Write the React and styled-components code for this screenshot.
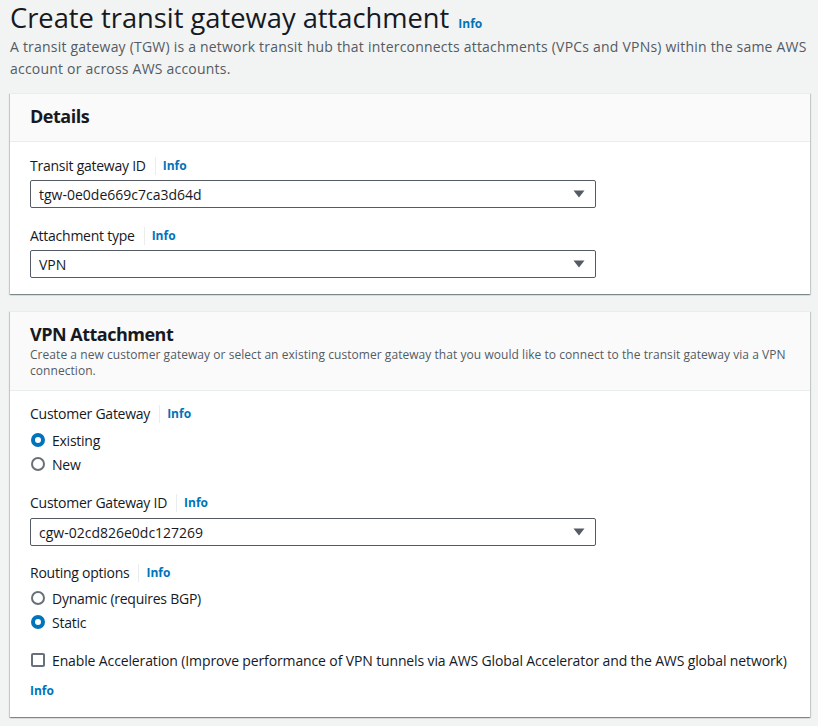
import React from "react";
import styled, { createGlobalStyle } from "styled-components";

const Global = createGlobalStyle`
  html, body { margin: 0; padding: 0; background: #f2f3f3; }
  body { font-family: "Open Sans", "Noto Sans", Arial, sans-serif; color: #16191f; }
  * { box-sizing: border-box; }
`;

const Page = styled.div`
  padding: 0 8px 10px 10px;
  width: 818px;
`;

const TitleRow = styled.div`
  display: flex;
  align-items: baseline;
  gap: 9px;
`;

const Title = styled.h1`
  margin: 0;
  font-size: 27.3px;
  font-weight: 400;
  line-height: 36px;
  color: #16191f;
`;

const Info = styled.a`
  font-size: 12px;
  font-weight: 700;
  color: #0073bb;
  text-decoration: none;
  line-height: 16px;
`;

const Description = styled.p`
  margin: 0 0 13px 0;
  font-size: 14px;
  line-height: 22px;
  letter-spacing: 0.21px;
  color: #545b64;
`;

const Panel = styled.section`
  background: #fff;
  width: 800px;
  box-shadow: 0 1px 1px 0 rgba(0, 28, 36, 0.3), 1px 1px 1px 0 rgba(0, 28, 36, 0.15),
    -1px 1px 1px 0 rgba(0, 28, 36, 0.15);
  border-top: 1px solid #eaeded;
  margin-bottom: 17px;
`;

const PanelHeader = styled.header`
  background: #fafafa;
  border-bottom: 1px solid #eaeded;
  padding: 10px 20px ${(p) => (p.$desc ? "11px" : "13px")};
`;

const PanelTitle = styled.h2`
  margin: 0;
  font-size: 18px;
  font-weight: 700;
  letter-spacing: -0.5px;
  line-height: 24px;
`;

const PanelDesc = styled.p`
  margin: 1px 0 0;
  font-size: 12px;
  line-height: 16px;
  letter-spacing: 0.05px;
  color: #545b64;
`;

const PanelBody = styled.div`
  padding: ${(p) => p.$pt} 20px ${(p) => p.$pb};
  display: flex;
  flex-direction: column;
  align-items: flex-start;
`;

const Field = styled.div`
  display: flex;
  flex-direction: column;
  margin-bottom: ${(p) => p.$mb || "0"};
`;

const LabelRow = styled.div`
  display: flex;
  align-items: center;
  height: 20px;
  margin-bottom: ${(p) => p.$mb || "4px"};
`;

const Label = styled.span`
  font-size: 14px;
  line-height: 20px;
  letter-spacing: -0.25px;
  color: #16191f;
`;

const Divider = styled.span`
  width: 1px;
  height: 18px;
  background: #eaeded;
  margin: 0 7px 0 9px;
`;

const Select = styled.div`
  width: 566px;
  height: 28px;
  border: 1px solid #545b64;
  border-radius: 2px;
  display: flex;
  align-items: center;
  justify-content: space-between;
  padding: 0 10px 0 8px;
  font-size: 14px;
  color: #16191f;
`;

const RadioList = styled.div`
  display: flex;
  flex-direction: column;
  gap: 4px;
`;

const RadioRow = styled.label`
  display: flex;
  align-items: center;
  gap: 7px;
  height: 20px;
  font-size: 14px;
  letter-spacing: ${(p) => p.$ls || "-0.25px"};
  white-space: nowrap;
  color: #16191f;
`;

const RadioDot = styled.span`
  width: 14px;
  height: 14px;
  border-radius: 50%;
  margin-left: 1px;
  border: ${(p) => (p.$on ? "4px solid #0073bb" : "2px solid #687078")};
  background: #fff;
  flex: none;
`;

const CheckBox = styled.span`
  width: 14px;
  height: 14px;
  border-radius: 2px;
  margin-left: 1px;
  border: 2px solid #687078;
  background: #fff;
  flex: none;
`;

const Caret = () => (
  <svg width="12" height="8" viewBox="0 0 12 8">
    <path d="M0.5 0.5 H11.5 L6 7.5 Z" fill="#545b64" />
  </svg>
);

const InfoLabel = ({ children, mb }) => (
  <LabelRow $mb={mb}>
    <Label>{children}</Label>
    <Divider />
    <Info href="#">Info</Info>
  </LabelRow>
);

const Radio = ({ on, children }) => (
  <RadioRow>
    <RadioDot $on={on} />
    {children}
  </RadioRow>
);

export default function App() {
  return (
    <Page>
      <Global />
      <TitleRow>
        <Title>Create transit gateway attachment</Title>
        <Info href="#">Info</Info>
      </TitleRow>
      <Description>
        A transit gateway (TGW) is a network transit hub that interconnects attachments (VPCs and VPNs) within the same AWS
        account or across AWS accounts.
      </Description>

      <Panel>
        <PanelHeader>
          <PanelTitle>Details</PanelTitle>
        </PanelHeader>
        <PanelBody $pt="14px" $pb="16px">
          <Field $mb="18px">
            <InfoLabel>Transit gateway ID</InfoLabel>
            <Select>
              <span>tgw-0e0de669c7ca3d64d</span>
              <Caret />
            </Select>
          </Field>
          <Field>
            <InfoLabel>Attachment type</InfoLabel>
            <Select>
              <span>VPN</span>
              <Caret />
            </Select>
          </Field>
        </PanelBody>
      </Panel>

      <Panel>
        <PanelHeader $desc>
          <PanelTitle>VPN Attachment</PanelTitle>
          <PanelDesc>
            Create a new customer gateway or select an existing customer gateway that you would like to connect to the transit gateway via a VPN
            connection.
          </PanelDesc>
        </PanelHeader>
        <PanelBody $pt="13px" $pb="18px">
          <Field $mb="19px">
            <InfoLabel mb="6px">Customer Gateway</InfoLabel>
            <RadioList>
              <Radio on>Existing</Radio>
              <Radio>New</Radio>
            </RadioList>
          </Field>
          <Field $mb="17px">
            <InfoLabel mb="5px">Customer Gateway ID</InfoLabel>
            <Select>
              <span>cgw-02cd826e0dc127269</span>
              <Caret />
            </Select>
          </Field>
          <Field $mb="18px">
            <InfoLabel mb="5px">Routing options</InfoLabel>
            <RadioList>
              <Radio>Dynamic (requires BGP)</Radio>
              <Radio on>Static</Radio>
            </RadioList>
          </Field>
          <Field $mb="13px">
            <RadioRow $ls="-0.13px">
              <CheckBox />
              Enable Acceleration (Improve performance of VPN tunnels via AWS Global Accelerator and the AWS global network)
            </RadioRow>
          </Field>
          <Info href="#">Info</Info>
        </PanelBody>
      </Panel>
    </Page>
  );
}
